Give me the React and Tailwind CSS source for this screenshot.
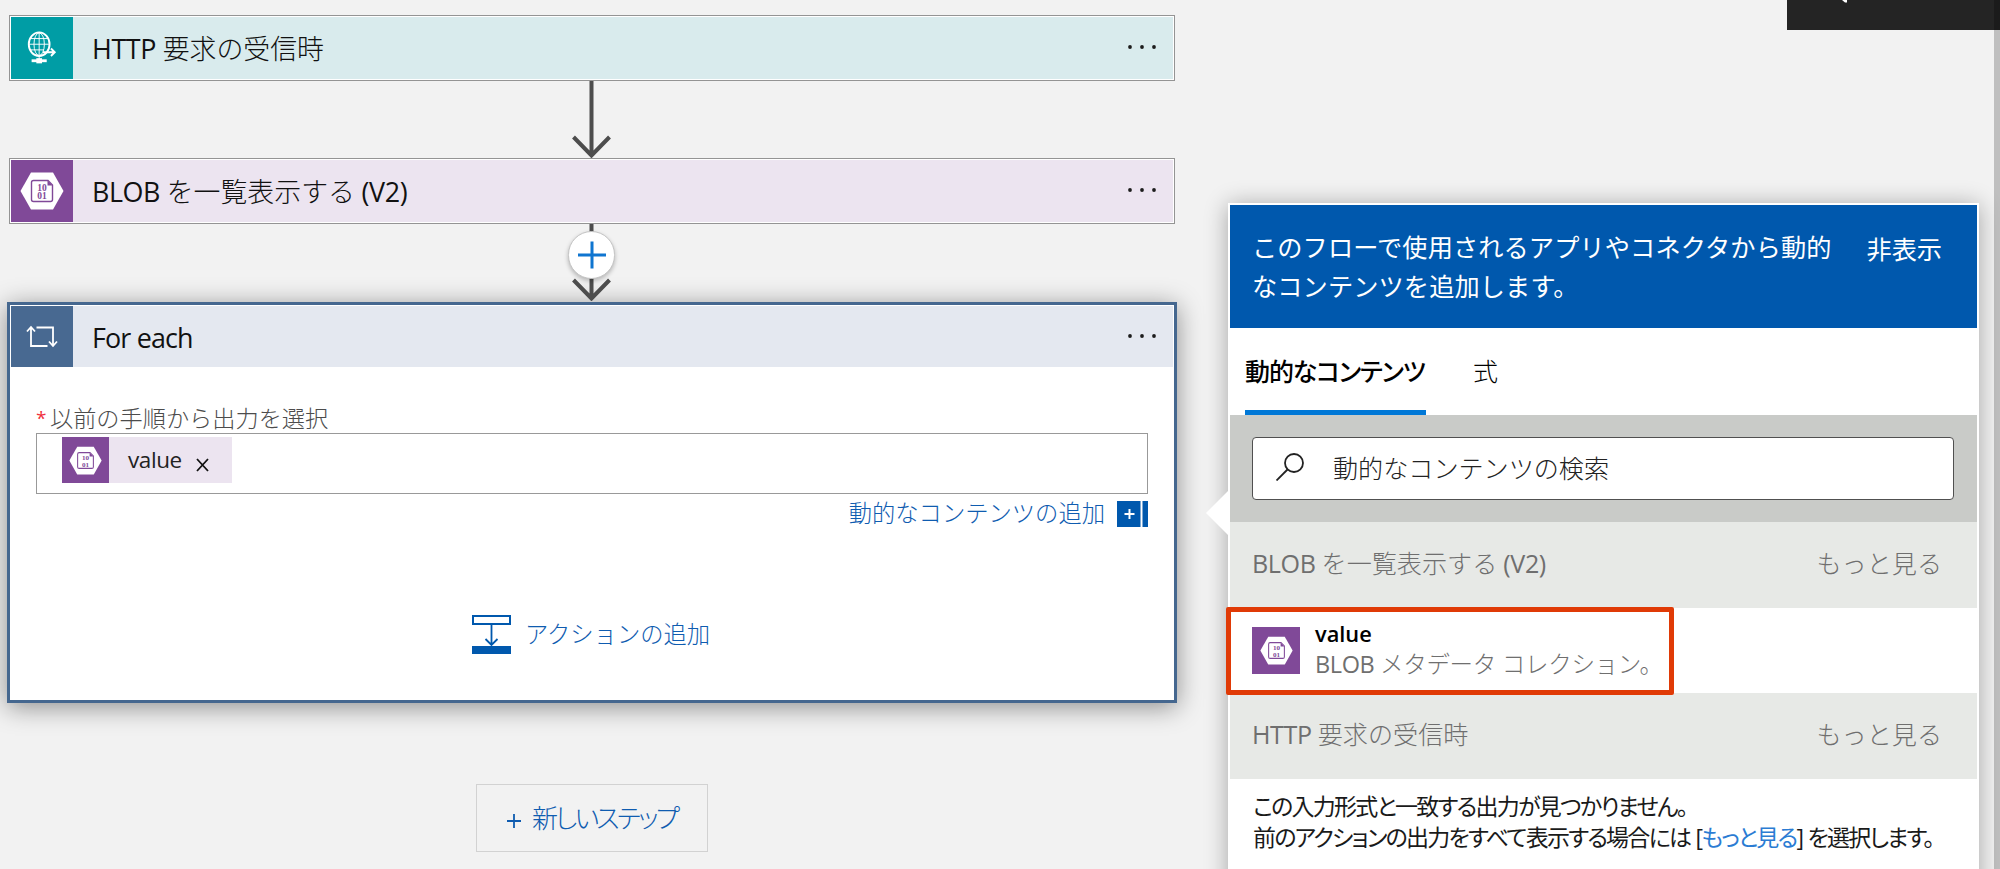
import clsx from "clsx";

const BlobIcon = ({ className }) => (
  <svg viewBox="0 0 44 38" className={className} fill="none">
    <path d="M11 0.5h22L43.5 19 33 37.5H11L0.5 19z" fill="#fff" />
    <path
      d="M13.5 8.5h14.5l4.5 4.5v14.500a2 2 0 0 1-2 2h-17a2 2 0 0 1-2-2v-17a2 2 0 0 1 2-2z"
      stroke="#804998"
      strokeWidth="1.4"
    />
    <path d="M27.500 8.500v5h5z" fill="#804998" />
    <text
      x="22"
      y="18.500"
      textAnchor="middle"
      fontSize="9.500"
      fontWeight="700"
      fontFamily="Liberation Serif, serif"
      fill="#804998"
    >
      10
    </text>
    <text
      x="22"
      y="27"
      textAnchor="middle"
      fontSize="9.500"
      fontWeight="700"
      fontFamily="Liberation Serif, serif"
      fill="#804998"
    >
      01
    </text>
  </svg>
);

const GlobeIcon = () => (
  <svg
    viewBox="0 0 30 36"
    className="w-[30px] h-[34px]"
    fill="none"
    stroke="#fff"
    strokeWidth="1"
  >
    <ellipse cx="12" cy="14" rx="11" ry="12.500" strokeWidth="2" />
    <ellipse cx="12" cy="14" rx="5.500" ry="12" />
    <path d="M12 1v29M1 14h22M3 8h18M3 20h14" />
    <path d="M16 22.500h12M24.500 18.500l4 4-4 4" strokeWidth="2" />
    <path d="M4 31.500h16" strokeWidth="3" />
    <path d="M9 31.500h6" strokeWidth="5.500" />
  </svg>
);

const LoopIcon = () => (
  <svg
    viewBox="0 0 32 24"
    className="w-[32px] h-[24px]"
    fill="none"
    stroke="#fff"
    strokeWidth="1.8"
  >
    <path d="M1 6.500l4-4.500 4 4.500M5 2.500v18.500h16.500" />
    <path d="M10.500 2.500h16.500v18.500M23 16.500l4 4.500 4-4.500" />
  </svg>
);

const Dots = () => (
  <svg viewBox="0 0 28 4" className="w-[28px] h-[4px]" fill="#1c1c1c">
    <circle cx="2" cy="2" r="1.900" />
    <circle cx="14" cy="2" r="1.900" />
    <circle cx="26" cy="2" r="1.900" />
  </svg>
);

const Arrow = () => (
  <svg
    viewBox="0 0 40 77"
    className="w-[40px] h-[77px]"
    fill="none"
    stroke="#4d4d4d"
    strokeWidth="4"
  >
    <path d="M19.500 0v74M1.500 56l18 18.500 18-18.500" />
  </svg>
);

// Latin runs are set one weight heavier than the Japanese text around them
const Latin = ({ children }) => (
  <span className="font-normal tracking-[-0.4px] whitespace-pre">{children}</span>
);

const CardHeader = ({ icon, title, iconBg, bg, className }) => (
  <div className={clsx("flex items-center", bg, className)}>
    <div
      className={clsx(
        "w-[62px] self-stretch flex items-center justify-center",
        iconBg
      )}
    >
      {icon}
    </div>
    <div className="flex-1 pl-[19px] pt-[2px] text-[26.9px] leading-[40px] text-[#111]">
      {title}
    </div>
    <div className="pr-[17px] pb-[2px]">
      <Dots />
    </div>
  </div>
);

const SectionHeader = ({ children }) => (
  <div className="h-[86px] pb-[3px] pl-[22px] pr-[35px] flex items-center justify-between bg-[#e7e9e6] text-[25.1px] text-[#6f6f6f]">
    <div>{children}</div>
    <div>もっと見る</div>
  </div>
);

function Designer() {
  return (
    <div className="w-[1175px] shrink-0 pl-[9px] pt-[15px] flex flex-col items-center">
      <div className="w-[1166px] h-[66px] border border-[#949494] bg-white p-px">
        <CardHeader
          icon={<GlobeIcon />}
          title={
            <>
              <Latin>HTTP </Latin>要求の受信時
            </>
          }
          iconBg="bg-[#009da5]"
          bg="bg-[#d9ebed]"
          className="h-full"
        />
      </div>

      <Arrow />

      <div className="w-[1166px] h-[66px] border border-[#949494] bg-white p-px">
        <CardHeader
          icon={<BlobIcon className="w-[44px] h-[38px]" />}
          title={
            <>
              <Latin>BLOB </Latin>を一覧表示する<Latin> (V2)</Latin>
            </>
          }
          iconBg="bg-[#804998]"
          bg="bg-[#ece4f0]"
          className="h-full"
        />
      </div>

      <div className="relative z-10">
        <Arrow />
        <button className="absolute left-[-4px] top-[7px] w-[47px] h-[48px] rounded-full bg-white border border-[#c4c4c4] shadow-[0_2px_4px_rgba(0,0,0,0.25)] flex items-center justify-center">
          <svg viewBox="0 0 28 28" className="w-[28px] h-[28px]">
            <path d="M14 0.5v27M0 14h28" stroke="#0f75d0" strokeWidth="3" />
          </svg>
        </button>
      </div>

      <div className="w-[1170px] h-[401px] mt-px -mx-[2px] border-[3px] border-[#45678f] bg-white shadow-[0_4px_24px_rgba(0,0,0,0.42)]">
        <CardHeader
          icon={<LoopIcon />}
          title={<span className="font-normal tracking-[-0.85px]">For each</span>}
          iconBg="bg-[#486991]"
          bg="bg-[#e4e8f0]"
          className="h-[61px] mt-px mx-px"
        />
        <div className="pl-[26px] pr-[26px] pt-[35px]">
          <div className="flex items-center h-[30px] pt-[2px] text-[23.2px] text-[#4c4c4c]">
            <span className="w-[14px] text-[19px] leading-[24px] font-normal text-[#f0303c]">*</span>
            以前の手順から出力を選択
          </div>
          <div className="mt-px h-[61px] border border-[#999] pl-[25px] pt-[3px]">
            <div className="flex h-[46px] w-[170px] items-center bg-[#ece4f0]">
              <div className="flex h-full w-[47px] items-center justify-center bg-[#804998]">
                <BlobIcon className="w-[33px] h-[29px]" />
              </div>
              <span className="ml-[19px] w-[54px] text-[22.500px] leading-[30px] font-normal tracking-[-0.4px] text-[#222]">
                value
              </span>
              <svg viewBox="0 0 13 14" className="ml-[14px] mt-[10px] w-[13px] h-[14px]">
                <path d="M1 1l11 12M12 1L1 13" stroke="#111" strokeWidth="1.800" />
              </svg>
            </div>
          </div>
          <div className="mt-[4px] flex h-[32px] items-center justify-end gap-[12px] text-[23.3px] text-[#0f5cb0]">
            <span className="pb-[2px]">動的なコンテンツの追加</span>
            <svg viewBox="0 0 31 26" className="w-[31px] h-[26px]">
              <path d="M0 0h23.500v26H0zM25.500 0H31v26h-5.500z" fill="#0058ad" />
              <path d="M7.500 13h10M12.500 8v10" stroke="#fff" strokeWidth="2" />
            </svg>
          </div>
        </div>
        <div className="mt-[85px] flex items-center justify-center gap-[14px] pr-[2px] text-[23.3px] text-[#0f5cb0]">
          <svg viewBox="0 0 39 39" className="w-[39px] h-[39px]" fill="none" stroke="#0058ad">
            <path d="M1 1h37v8H1z" strokeWidth="2" />
            <path d="M19.500 9v21M13.500 24l6 6 6-6" strokeWidth="1.800" />
            <path d="M0 31h39v8H0z" fill="#0058ad" stroke="none" />
          </svg>
          アクションの追加
        </div>
      </div>

      <button className="mt-[81px] w-[232px] h-[68px] shrink-0 border border-[#d2d2d2] flex items-center justify-center text-[26px] text-[#0f5cb0]">
        <svg viewBox="0 0 14 14" className="mr-[11px] mt-[6px] w-[14px] h-[14px]">
          <path d="M0 7h14M7 0v14" stroke="#0f5cb0" strokeWidth="1.800" />
        </svg>
        <span className="[font-feature-settings:'palt'] tracking-[-2.7px]">新しいステップ</span>
      </button>
    </div>
  );
}

function ContentPicker() {
  return (
    <div className="relative ml-[53px] mt-[203px] w-[751px] h-[700px] shrink-0 bg-white pl-[2px] pr-[2px] pt-[2px] shadow-[0_2px_22px_rgba(0,0,0,0.32)]">
      {/* callout beak */}
      <svg viewBox="0 0 22 44" className="absolute left-[-22px] top-[288px] w-[22px] h-[44px]">
        <path d="M22 0v44L0 22z" fill="#fff" />
      </svg>

      <div className="h-[123px] bg-[#0058ad] pl-[22px] pr-[35px] pt-[23px] flex justify-between text-[25.2px] leading-[38.500px] font-normal text-white">
        <div className="w-[586px] tracking-[0.12px]">
          このフローで使用されるアプリやコネクタから動的なコンテンツを追加します。
        </div>
        <div className="pt-[2px]">非表示</div>
      </div>

      <div className="h-[87px] pl-[15px] flex gap-[47px] text-[25px] leading-[86px] text-black">
        <div className="w-[181px] border-b-[5px] border-[#0078d7] font-medium whitespace-nowrap tracking-[-1.1px] [font-feature-settings:'palt']">
          動的なコンテンツ
        </div>
        <div>式</div>
      </div>

      <div className="h-[107px] bg-[#c9cbc8] px-[22px] pt-[22px]">
        <div className="h-[63px] w-[702px] rounded-[4px] border border-[#505050] bg-white flex items-center text-[25.1px] text-[#222]">
          <svg
            viewBox="0 0 28 28"
            className="ml-[23px] mb-[3px] w-[28px] h-[28px]"
            fill="none"
            stroke="#222"
            strokeWidth="1.800"
          >
            <circle cx="18" cy="10" r="9" />
            <path d="M11.500 16.500L0.500 27.500" />
          </svg>
          <span className="ml-[29px]">動的なコンテンツの検索</span>
        </div>
      </div>

      <SectionHeader>
        <Latin>BLOB </Latin>を一覧表示する<Latin> (V2)</Latin>
      </SectionHeader>

      <div className="relative h-[85px] pl-[22px] flex items-center">
        <div className="absolute left-[-4px] top-[-1px] w-[448px] h-[88px] rounded-[2px] border-[5px] border-[#e03a06]" />
        <div className="flex h-[47px] w-[48px] items-center justify-center bg-[#804998]">
          <BlobIcon className="w-[33px] h-[29px]" />
        </div>
        <div className="ml-[15px] pb-[4px] leading-[30px]">
          <div className="text-[21.800px] font-semibold text-black">value</div>
          <div className="text-[23.500px] tracking-[-0.3px] text-[#6f6f6f]">
            <Latin>BLOB </Latin>メタデータ コレクション。
          </div>
        </div>
      </div>

      <SectionHeader>
        <Latin>HTTP </Latin>要求の受信時
      </SectionHeader>

      <div className="pl-[23px] pt-[12px] text-[23px] leading-[31px] text-[#1a1a1a] whitespace-nowrap font-normal tracking-[-1.75px] [word-spacing:1px] [font-feature-settings:'palt']">
        <div>この入力形式と一致する出力が見つかりません。</div>
        <div>
          前のアクションの出力をすべて表示する場合には [
          <a className="text-[#2b7cd3]">もっと見る</a>] を選択します。
        </div>
      </div>
    </div>
  );
}

export default function App() {
  return (
    <div
      lang="ja"
      className="relative flex w-[2000px] h-[869px] overflow-hidden bg-[#f2f2f2] font-['Open_Sans','Noto_Sans_CJK_JP',sans-serif] font-light"
    >
      <Designer />
      <ContentPicker />
      <div className="ml-[15px] w-[6px] shrink-0 bg-[#bfbfbf]" />
      <div className="absolute right-0 top-0 flex w-[213px] h-[30px] justify-end bg-[#242424]">
        <svg viewBox="0 0 6 3" className="absolute left-[55px] top-0 w-[6px] h-[3px]">
          <path d="M0 0h5v2.500H3z" fill="#fff" />
        </svg>
        <div className="w-[6px] bg-[#1b1b1b]" />
      </div>
    </div>
  );
}
